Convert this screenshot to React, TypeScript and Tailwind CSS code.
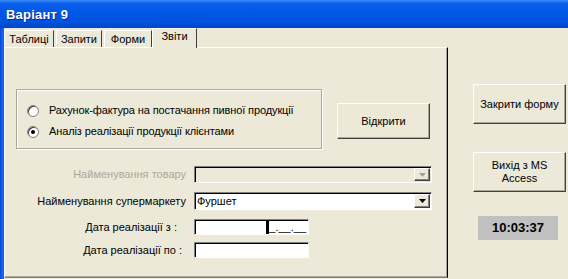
import React from "react";

const font = { fontFamily: '"Liberation Sans", Arial, sans-serif' };

function Radio({ checked }: { checked?: boolean }) {
  return (
    <div className="w-[12px] h-[12px] rounded-full border border-[#808080] bg-white flex items-center justify-center shadow-[inset_1px_1px_0_#404040]">
      {checked && <div className="w-[4px] h-[4px] rounded-full bg-black" />}
    </div>
  );
}

function Arrow({ disabled }: { disabled?: boolean }) {
  return (
    <div className="w-[16px] h-full bg-[#ece9d8] border-t border-l border-t-white border-l-white border-r border-b border-r-[#404040] border-b-[#404040] shadow-[inset_-1px_-1px_0_#808080] flex items-center justify-center">
      <svg width="7" height="4" viewBox="0 0 7 4">
        <path d="M0 0h7L3.5 4z" fill={disabled ? "#a0a0a0" : "#000"} />
      </svg>
    </div>
  );
}

function Sunken({ className, children, bg }: { className?: string; children?: React.ReactNode; bg: string }) {
  return (
    <div
      className={`border-t border-l border-t-[#808080] border-l-[#808080] border-b border-r border-b-white border-r-white shadow-[inset_1px_1px_0_#000] ${bg} ${className ?? ""}`}
    >
      {children}
    </div>
  );
}

function Button({ className, children }: { className?: string; children: React.ReactNode }) {
  return (
    <div
      className={`bg-[#ece9d8] border-t border-l border-t-white border-l-white border-r border-b border-r-[#404040] border-b-[#404040] shadow-[inset_-1px_-1px_0_#aca899] flex items-center justify-center text-center text-[11px] text-black leading-[13px] ${className ?? ""}`}
    >
      {children}
    </div>
  );
}

export default function App() {
  return (
    <div className="w-[568px] h-[279px] bg-[#ece9d8] overflow-hidden flex flex-col text-black" style={font}>
      {/* title bar */}
      <div className="h-[28px] bg-[linear-gradient(180deg,#3a8cf8_0%,#0a5fea_12%,#0058e6_45%,#0052dc_80%,#0046c8_100%)] flex items-center pl-[6px] pt-[1px]">
        <span className="text-white font-bold text-[13px] tracking-[0.2px] [text-shadow:1px_1px_0_#0a2a8a]">Варіант 9</span>
      </div>

      <div className="flex flex-1">
        <div className="w-[4px] bg-[linear-gradient(90deg,#0046d6,#0a5cf0,#1b66f0,#0b54d8)]" />

        {/* tab control */}
        <div className="w-[444px] flex flex-col">
          <div className="h-[19px] flex items-end text-[11px] leading-[13px]">
            <div className="h-[17px] w-[50px] border-t border-l border-t-white border-l-white border-r border-r-[#404040] flex items-center justify-center">
              Таблиці
            </div>
            <div className="h-[17px] w-[46px] ml-[2px] border-t border-l border-t-white border-l-white border-r border-r-[#404040] flex items-center justify-center">
              Запити
            </div>
            <div className="h-[17px] w-[48px] ml-[2px] border-t border-l border-t-white border-l-white border-r border-r-[#404040] flex items-center justify-center">
              Форми
            </div>
            <div className="h-[20px] w-[45px] -mb-[1px] relative z-10 bg-[#ece9d8] border-t border-l border-t-white border-l-white border-r border-r-[#404040] flex items-start justify-center pt-[1px]">
              Звіти
            </div>
          </div>
          <div className="flex-1 mb-[1px] border-t border-l border-t-white border-l-white border-r border-b border-r-[#000] border-b-[#808080] shadow-[inset_-1px_-1px_0_#aca899] pl-[11px] pt-[41px] text-[11px] leading-[13px]">
            <div className="flex items-start">
              <div className="w-[306px] h-[60px] border border-[#aca899] shadow-[inset_1px_1px_0_white,1px_1px_0_white] pl-[10px] pt-[14px] flex flex-col gap-[8px]">
                <div className="flex items-center gap-[10px] h-[13px]">
                  <Radio />
                  <span className="tracking-[-0.12px]">Рахунок-фактура на постачання пивної продукції</span>
                </div>
                <div className="flex items-center gap-[10px] h-[13px]">
                  <Radio checked />
                  <span className="tracking-[-0.12px]">Аналіз реалізації продукції клієнтами</span>
                </div>
              </div>
              <Button className="ml-[15px] mt-[14px] w-[93px] h-[36px]">Відкрити</Button>
            </div>

            <div className="mt-[17px] flex flex-col">
              <div className="flex items-center h-[17px]">
                <div className="w-[170px] text-right text-[#aca899]">Найменування товару</div>
                <Sunken bg="bg-[#ece9d8]" className="ml-[8px] w-[238px] h-[17px] flex justify-end p-[1px]">
                  <Arrow disabled />
                </Sunken>
              </div>
              <div className="flex items-center h-[18px] mt-[9px]">
                <div className="w-[170px] text-right">Найменування супермаркету</div>
                <Sunken bg="bg-white" className="ml-[8px] w-[238px] h-[18px] flex items-center justify-between p-[1px]">
                  <span className="pl-[1px]">Фуршет</span>
                  <Arrow />
                </Sunken>
              </div>
              <div className="flex items-center h-[16px] mt-[9px]">
                <div className="w-[170px] text-right pr-[9px]">Дата реалізації з :</div>
                <Sunken bg="bg-white" className="ml-[8px] w-[115px] h-[16px] flex items-center justify-end pr-[2px]">
                  <div className="w-[3px] h-[13px] bg-black" />
                  <span className="leading-[11px]">_.__.__</span>
                </Sunken>
              </div>
              <div className="flex items-center h-[16px] mt-[7px]">
                <div className="w-[170px] text-right pr-[4px]">Дата реалізації по :</div>
                <Sunken bg="bg-white" className="ml-[8px] w-[115px] h-[16px]" />
              </div>
            </div>
          </div>
        </div>

        {/* right side */}
        <div className="flex-1 pl-[25px] pt-[56px] flex flex-col">
          <Button className="w-[93px] h-[40px]">Закрити форму</Button>
          <Button className="w-[93px] h-[40px] mt-[28px]">
            Вихід з MS
            <br />
            Access
          </Button>
          <div className="ml-[5px] mt-[24px] w-[80px] h-[24px] bg-[#c0c0c0] flex items-center justify-center text-[13px] font-bold">
            10:03:37
          </div>
        </div>
      </div>
    </div>
  );
}
